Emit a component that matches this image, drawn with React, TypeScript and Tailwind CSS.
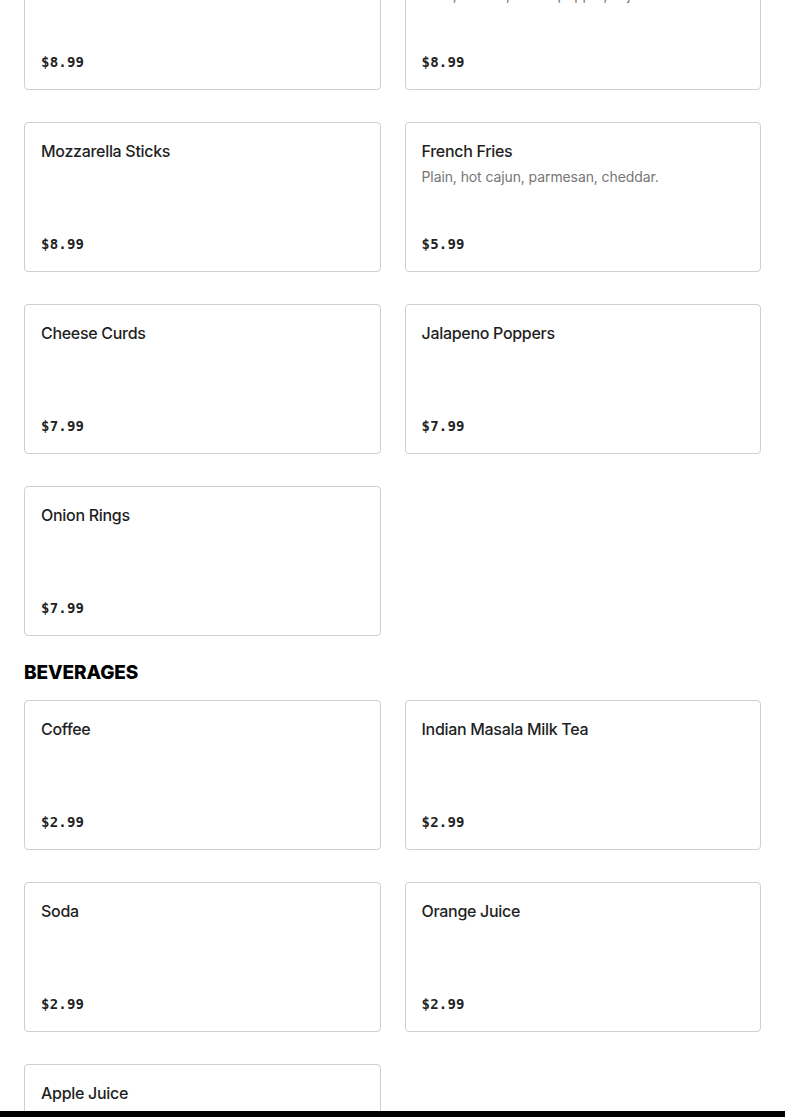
import React from 'react';

interface Item {
  name: string;
  desc?: string;
  price: string;
}

const sides: Item[] = [
  { name: 'Chicken Tenders', price: '$8.99' },
  { name: 'Chicken Wings', desc: 'Plain, buffalo, lemon pepper, cajun.', price: '$8.99' },
  { name: 'Mozzarella Sticks', price: '$8.99' },
  { name: 'French Fries', desc: 'Plain, hot cajun, parmesan, cheddar.', price: '$5.99' },
  { name: 'Cheese Curds', price: '$7.99' },
  { name: 'Jalapeno Poppers', price: '$7.99' },
  { name: 'Onion Rings', price: '$7.99' },
];

const beverages: Item[] = [
  { name: 'Coffee', price: '$2.99' },
  { name: 'Indian Masala Milk Tea', price: '$2.99' },
  { name: 'Soda', price: '$2.99' },
  { name: 'Orange Juice', price: '$2.99' },
  { name: 'Apple Juice', price: '$2.99' },
];

function MenuCard({ item }: { item: Item }) {
  return (
    <div className="h-[150px] rounded-[4px] border border-[#cfcfcf] bg-white px-4 pt-4 pb-[17px] flex flex-col">
      <div className="text-[16px] leading-6 font-medium text-[#1f1f1f] tracking-[-0.3px]">{item.name}</div>
      {item.desc && (
        <div className="mt-[4px] text-[14px] leading-5 text-[#767676] tracking-[-0.1px]">{item.desc}</div>
      )}
      <div
        className="mt-auto text-[14px] leading-5 font-bold text-[#222] tracking-[0.2px]"
        style={{ fontFamily: '"DejaVu Sans Mono", "Liberation Mono", monospace' }}
      >
        {item.price}
      </div>
    </div>
  );
}

export default function App() {
  return (
    <div className="h-screen overflow-hidden bg-white" style={{ fontFamily: 'Inter, "Noto Sans", sans-serif' }}>
      <div className="-mt-[60px] px-6">
        <div className="grid grid-cols-2 gap-x-6 gap-y-8">
          {sides.map((it) => (
            <MenuCard key={it.name} item={it} />
          ))}
        </div>

        <h2 className="mt-[25px] mb-[15px] text-[19px] leading-6 font-extrabold uppercase text-black tracking-[-0.1px]">
          Beverages
        </h2>

        <div className="grid grid-cols-2 gap-x-6 gap-y-8 pb-24">
          {beverages.map((it) => (
            <MenuCard key={it.name} item={it} />
          ))}
        </div>
      </div>

      <div className="fixed bottom-0 left-0 right-0 h-[6px] bg-black" />
    </div>
  );
}
